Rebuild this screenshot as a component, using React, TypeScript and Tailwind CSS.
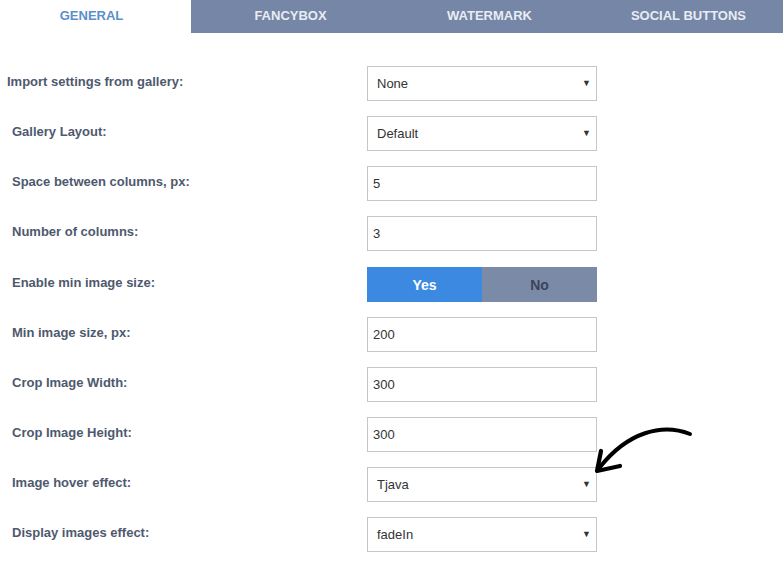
import React from "react";

const tabs = ["GENERAL", "FANCYBOX", "WATERMARK", "SOCIAL BUTTONS"];

type Row =
  | { label: string; kind: "select"; value: string; first?: boolean }
  | { label: string; kind: "input"; value: string }
  | { label: string; kind: "toggle" };

const rows: Row[] = [
  { label: "Import settings from gallery:", kind: "select", value: "None", first: true },
  { label: "Gallery Layout:", kind: "select", value: "Default" },
  { label: "Space between columns, px:", kind: "input", value: "5" },
  { label: "Number of columns:", kind: "input", value: "3" },
  { label: "Enable min image size:", kind: "toggle" },
  { label: "Min image size, px:", kind: "input", value: "200" },
  { label: "Crop Image Width:", kind: "input", value: "300" },
  { label: "Crop Image Height:", kind: "input", value: "300" },
  { label: "Image hover effect:", kind: "select", value: "Tjava" },
  { label: "Display images effect:", kind: "select", value: "fadeIn" },
];

function Control({ row }: { row: Row }) {
  if (row.kind === "toggle") {
    return (
      <div className="flex h-[35px] w-[230px] text-[14px] font-bold">
        <div className="flex flex-1 items-center justify-center bg-[#3b89e1] pt-[1px] text-white">Yes</div>
        <div className="flex flex-1 items-center justify-center bg-[#7a8aa7] pt-[1px] text-[#3a4559]">No</div>
      </div>
    );
  }
  if (row.kind === "select") {
    return (
      <div className="flex h-[35px] w-[230px] items-center justify-between border border-[#c6c6c6] bg-white pl-[9px] pr-[5px] text-[13px] text-[#333]">
        <span>{row.value}</span>
        <span className="text-[9px] text-[#333]">▼</span>
      </div>
    );
  }
  return (
    <div className="flex h-[35px] w-[230px] items-center border border-[#c6c6c6] bg-white pl-[5px] text-[13px] text-[#333]">
      {row.value}
    </div>
  );
}

export default function App() {
  return (
    <div
      className="relative h-[561px] w-[783px] overflow-hidden bg-white"
      style={{ fontFamily: '"Liberation Sans", Arial, sans-serif' }}
    >
      <div className="-ml-2 flex h-[33px] w-[796px]">
        {tabs.map((t, i) => (
          <div
            key={t}
            className={
              "flex w-[199px] shrink-0 items-center justify-center pb-[2px] text-[13px] font-bold " +
              (i === 0 ? "bg-white text-[#5b8fca]" : "bg-[#7586a6] text-[#e8ecf3]")
            }
          >
            {t}
          </div>
        ))}
      </div>
      <div className="mt-[33px] flex flex-col gap-[15px]">
        {rows.map((r, i) => (
          <div key={r.label} className={"flex items-center " + (i === 4 ? "mt-[1px]" : "")}>
            <div
              className={
                "w-[367px] pb-[3px] text-[13px] font-bold text-[#4e596e] " +
                (r.kind === "select" && r.first ? "pl-[7px]" : "pl-[12px]")
              }
            >
              {r.label}
            </div>
            <Control row={r} />
          </div>
        ))}
      </div>
      <svg className="pointer-events-none absolute left-0 top-0" width="783" height="561">
        <path
          d="M690 434 C 662 423, 628 432, 600 467"
          fill="none"
          stroke="#000"
          strokeWidth="4"
          strokeLinecap="round"
        />
        <path
          d="M601 451 L 597 471 L 620 466"
          fill="none"
          stroke="#000"
          strokeWidth="4.2"
          strokeLinecap="round"
          strokeLinejoin="round"
        />
      </svg>
    </div>
  );
}
